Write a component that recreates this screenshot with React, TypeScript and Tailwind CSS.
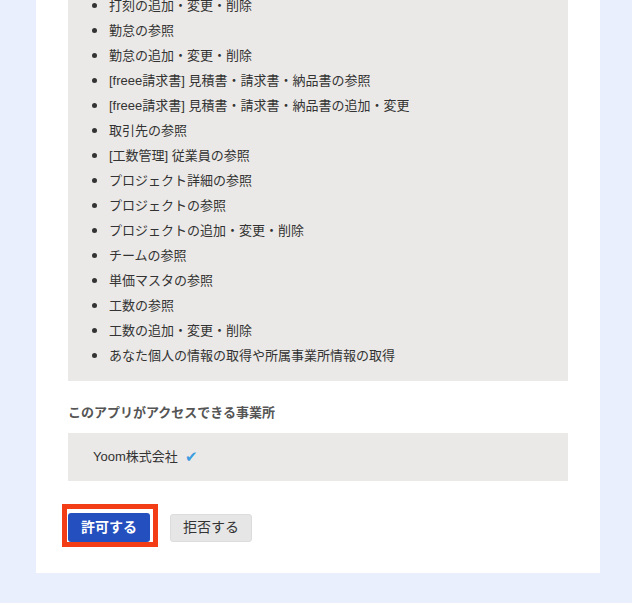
import React from "react";

const scopes = [
  "打刻の追加・変更・削除",
  "勤怠の参照",
  "勤怠の追加・変更・削除",
  "[freee請求書] 見積書・請求書・納品書の参照",
  "[freee請求書] 見積書・請求書・納品書の追加・変更",
  "取引先の参照",
  "[工数管理] 従業員の参照",
  "プロジェクト詳細の参照",
  "プロジェクトの参照",
  "プロジェクトの追加・変更・削除",
  "チームの参照",
  "単価マスタの参照",
  "工数の参照",
  "工数の追加・変更・削除",
  "あなた個人の情報の取得や所属事業所情報の取得",
];

export default function App() {
  return (
    <div
      className="min-h-screen bg-[#e9effc] overflow-hidden text-[#333]"
      style={{ fontFamily: '"Liberation Sans", "Noto Sans CJK JP", sans-serif' }}
    >
      <div className="ml-[36px] w-[564px] bg-white px-[32px] pb-[31px] flex flex-col">
        {/* permission scopes (page is scrolled, top is cut off) */}
        <ul className="-mt-[7px] bg-[#ebe9e7] pl-[24px] pb-[13px]">
          {scopes.map((s) => (
            <li key={s} className="flex items-center h-[25px] text-[13px]">
              <span className="w-[5px] h-[5px] rounded-full bg-[#333] mr-[12px]" />
              {s}
            </li>
          ))}
        </ul>

        <h3 className="mt-[24px] text-[13px] font-bold text-[#555] leading-[16px]">
          このアプリがアクセスできる事業所
        </h3>

        <div className="mt-[12px] h-[48px] bg-[#ebe9e7] flex items-center pl-[25px] text-[13px]">
          Yoom株式会社
          <span className="ml-[7px] text-[#3d9be0] text-[15px]">✔</span>
        </div>

        <div className="mt-[32px] flex items-center gap-[20px]">
          <div className="relative">
            <span className="absolute -left-[6px] -right-[8px] -top-[9px] -bottom-[5px] border-[5px] border-[#f23d17]" />
            <button className="relative h-[29px] w-[82px] rounded-[3px] bg-[#2450bf] text-white text-[14px] font-bold">
              許可する
            </button>
          </div>
          <button className="h-[28px] w-[82px] rounded-[3px] border border-[#dcdcdc] bg-[#e6e6e6] text-[#333] text-[14px]">
            拒否する
          </button>
        </div>
      </div>
    </div>
  );
}
